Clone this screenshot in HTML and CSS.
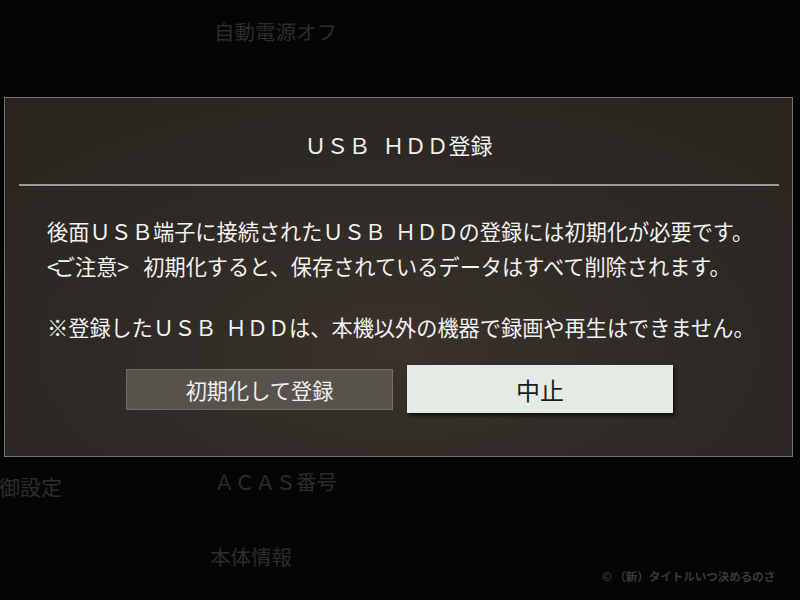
FILE: index.html
```html
<!DOCTYPE html>
<html lang="ja">
<head>
<meta charset="utf-8">
<title>USB HDD登録</title>
<link rel="stylesheet" href="styles.css">
</head>
<body>
<div class="screen">
  <div class="menu">
    <div class="menu-col menu-col-left">
      <div class="menu-item">御設定</div>
    </div>
    <div class="menu-col menu-col-right">
      <div class="menu-item">自動電源オフ</div>
      <div class="menu-gap"></div>
      <div class="menu-item">ＡＣＡＳ番号</div>
      <div class="menu-item menu-item-shift">本体情報</div>
    </div>
  </div>

  <div class="dialog">
    <div class="dialog-title">ＵＳＢ<span class="gap gap-title"></span>ＨＤＤ登録</div>
    <div class="dialog-rule"></div>
    <div class="dialog-body">
      <p class="para">後面ＵＳＢ端子に接続されたＵＳＢ<span class="gap"></span>ＨＤＤの登録には初期化が必要です。<br><span class="ang ang-open">&lt;</span>ご注意<span class="ang">&gt;</span>　初期化すると、保存されているデータはすべて削除されます。</p>
      <p class="para para-note">※登録したＵＳＢ<span class="gap"></span>ＨＤＤは、本機以外の機器で録画や再生はできません。</p>
    </div>
    <div class="dialog-buttons">
      <div class="btn btn-dark">初期化して登録</div>
      <div class="btn btn-light">中止</div>
    </div>
  </div>

  <div class="copyright">© （新）タイトルいつ決めるのさ</div>
</div>
</body>
</html>
```
FILE: styles.css
```css
html, body {
  margin: 0;
  padding: 0;
}
body {
  width: 800px;
  height: 600px;
  overflow: hidden;
  background: #050505;
  font-family: "Noto Sans CJK JP", "Noto Sans", sans-serif;
}
.screen {
  position: relative;
  width: 800px;
  height: 600px;
  overflow: hidden;
}
.menu {
  display: flex;
}
.menu-col-left {
  width: 215px;
  margin-left: -1px;
  padding-top: 449px;
}
.menu-col-right {
  margin-top: -6px;
}
.menu-item {
  height: 75px;
  line-height: 75px;
  font-size: 20.5px;
  color: #2c2c2c;
  white-space: nowrap;
}
.menu-col-left .menu-item {
  font-size: 21px;
}
.menu-item-shift {
  margin-left: -4px;
}
.menu-gap {
  height: 375px;
}

.dialog {
  position: absolute;
  left: 4px;
  top: 97px;
  width: 789px;
  height: 360px;
  box-sizing: border-box;
  border: 1px solid #78746b;
  background: radial-gradient(ellipse 70% 80% at 50% 70%, #3a322b 0%, #2d2925 60%, #29261f 100%);
  color: #f2f2f2;
}
.dialog-title {
  padding-top: 31px;
  height: 30px;
  line-height: 30px;
  padding-bottom: 25px;
  text-align: center;
  font-size: 22px;
  color: #f0f0f0;
  white-space: nowrap;
}
.gap {
  display: inline-block;
  width: 9px;
}
.gap-title {
  width: 12px;
}
.ang {
  letter-spacing: -7px;
}
.ang-open {
  letter-spacing: -5px;
}
.dialog-rule {
  height: 2px;
  margin: 0 13px 0 14px;
  background: #9e9c97;
}
.dialog-body {
  padding-left: 42px;
  padding-top: 27px;
}
.para {
  margin: 0;
  font-size: 21.2px;
  line-height: 35px;
  white-space: nowrap;
}
.para-note {
  margin-top: 26px;
}
.dialog-buttons {
  display: flex;
  align-items: center;
  gap: 14px;
  padding-left: 121px;
  margin-top: 21px;
}
.btn {
  box-sizing: border-box;
  display: flex;
  align-items: center;
  justify-content: center;
  width: 267px;
}
.btn-dark {
  height: 41px;
  background: #57534c;
  border: 1px solid #726e66;
  color: #eeeeee;
  font-size: 21.2px;
}
.btn-light {
  width: 266px;
  height: 48px;
  background: #e4ebe5;
  color: #1c1c1c;
  font-size: 24px;
  box-shadow: 2px 3px 3px rgba(0, 0, 0, 0.6);
}
.copyright {
  position: absolute;
  left: 602px;
  top: 568px;
  font-size: 11.5px;
  font-weight: bold;
  color: #3a3a3a;
  white-space: nowrap;
}
```
